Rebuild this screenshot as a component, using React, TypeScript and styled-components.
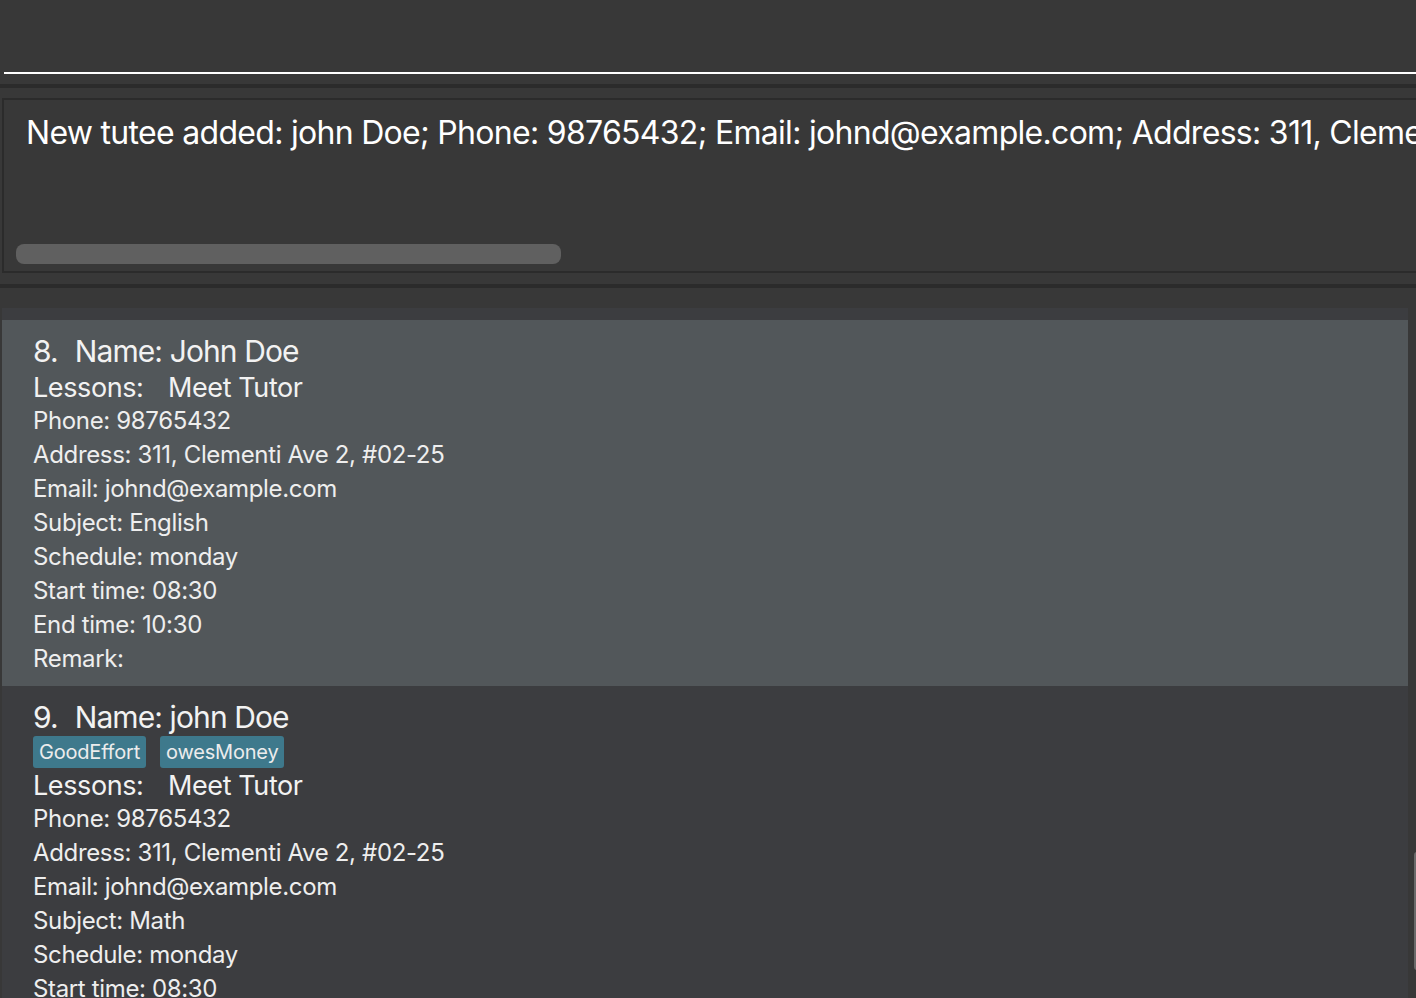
import React from "react";
import styled, { createGlobalStyle } from "styled-components";

const GlobalStyle = createGlobalStyle`
  html, body {
    margin: 0;
    padding: 0;
    background: #383838;
    overflow: hidden;
  }
  body {
    font-family: Inter, "Noto Sans", "Liberation Sans", sans-serif;
  }
`;

const Window = styled.div`
  width: 1416px;
  height: 998px;
  display: flex;
  flex-direction: column;
  background: #383838;
  overflow: hidden;
`;

const CommandBar = styled.div`
  height: 84px;
  padding-left: 4px;
  box-sizing: border-box;
  flex: none;
`;

const CommandField = styled.div`
  height: 74px;
  box-sizing: border-box;
  border-bottom: 2px solid #ffffff;
`;

const Divider = styled.div`
  height: 4px;
  background: #2b2b2b;
  flex: none;
`;

const ResultPane = styled.div`
  padding: 10px 0 11px 2px;
  flex: none;
`;

const ResultBox = styled.div`
  height: 175px;
  box-sizing: border-box;
  border: 2px solid #2b2b2b;
  border-right: none;
  display: flex;
  flex-direction: column;
  overflow: hidden;
`;

const ResultText = styled.div`
  padding: 13px 0 0 22px;
  font-size: 32px;
  line-height: 40px;
  color: #ffffff;
  white-space: nowrap;
  letter-spacing: -0.7px;
`;

const HScrollThumb = styled.div`
  margin: auto 0 7px 12px;
  width: 545px;
  height: 20px;
  border-radius: 8px;
  background: #606060;
`;

const ListPane = styled.div`
  padding: 20px 0 0 2px;
  flex: 1;
  min-height: 0;
  display: flex;
`;

const List = styled.div`
  flex: 1;
  display: flex;
  background: #3c3d40;
  padding-top: 12px;
  min-height: 0;
`;

const Cards = styled.div`
  width: 1406px;
  display: flex;
  flex-direction: column;
`;

const VTrack = styled.div`
  flex: 1;
  background: #383838;
  display: flex;
  flex-direction: column;
  margin-top: -12px;
`;

const VThumb = styled.div`
  margin: 544px 0 0 6px;
  width: 6px;
  height: 118px;
  border-radius: 3px;
  background: #6a6a6a;
`;

const Card = styled.div<{ $selected?: boolean }>`
  background: ${(p) => (p.$selected ? "#52575a" : "#3c3d40")};
  padding: 12px 0 10px 31px;
  display: flex;
  flex-direction: column;
  color: #eeeeee;
  flex: none;
`;

const NameRow = styled.div`
  display: flex;
  align-items: center;
  gap: 17px;
  height: 38px;
  font-size: 30px;
  letter-spacing: -0.9px;
  color: #f2f2f2;
`;

const Index = styled.span``;

const TagRow = styled.div`
  display: flex;
  gap: 14px;
  height: 32px;
  align-items: stretch;
`;

const Tag = styled.span`
  display: flex;
  align-items: center;
  padding: 0 6px;
  background: #3e798c;
  border-radius: 3px;
  font-size: 20px;
  color: #ececec;
  letter-spacing: -0.2px;
`;

const LessonRow = styled.div`
  display: flex;
  align-items: center;
  height: 34px;
  font-size: 27px;
  letter-spacing: -0.4px;
  color: #f2f2f2;
`;

const LessonLabel = styled.span`
  width: 135px;
`;

const Detail = styled.div`
  height: 34px;
  line-height: 34px;
  font-size: 24px;
  letter-spacing: -0.35px;
  color: #eeeeee;
`;

type Person = {
  index: number;
  name: string;
  tags: string[];
  phone: string;
  address: string;
  email: string;
  subject: string;
  schedule: string;
  start: string;
  end: string;
  remark: string;
  selected?: boolean;
};

const people: Person[] = [
  {
    index: 8,
    name: "John Doe",
    tags: [],
    phone: "98765432",
    address: "311, Clementi Ave 2, #02-25",
    email: "johnd@example.com",
    subject: "English",
    schedule: "monday",
    start: "08:30",
    end: "10:30",
    remark: "",
    selected: true,
  },
  {
    index: 9,
    name: "john Doe",
    tags: ["GoodEffort", "owesMoney"],
    phone: "98765432",
    address: "311, Clementi Ave 2, #02-25",
    email: "johnd@example.com",
    subject: "Math",
    schedule: "monday",
    start: "08:30",
    end: "10:30",
    remark: "",
  },
];

function PersonCard({ p }: { p: Person }) {
  return (
    <Card $selected={p.selected}>
      <NameRow>
        <Index>{p.index}.</Index>
        <span>Name: {p.name}</span>
      </NameRow>
      {p.tags.length > 0 && (
        <TagRow>
          {p.tags.map((t) => (
            <Tag key={t}>{t}</Tag>
          ))}
        </TagRow>
      )}
      <LessonRow>
        <LessonLabel>Lessons:</LessonLabel>
        <span>Meet Tutor</span>
      </LessonRow>
      <Detail>Phone: {p.phone}</Detail>
      <Detail>Address: {p.address}</Detail>
      <Detail>Email: {p.email}</Detail>
      <Detail>Subject: {p.subject}</Detail>
      <Detail>Schedule: {p.schedule}</Detail>
      <Detail>Start time: {p.start}</Detail>
      <Detail>End time: {p.end}</Detail>
      <Detail>Remark: {p.remark}</Detail>
    </Card>
  );
}

export default function App() {
  return (
    <>
      <GlobalStyle />
      <Window>
        <CommandBar>
          <CommandField />
        </CommandBar>
        <Divider />
        <ResultPane>
          <ResultBox>
            <ResultText>
              New tutee added: john Doe; Phone: 98765432; Email: johnd@example.com; Address: 311, Clementi Ave 2, #02-25; Tags: [GoodEffort][owesMoney]
            </ResultText>
            <HScrollThumb />
          </ResultBox>
        </ResultPane>
        <Divider />
        <ListPane>
          <List>
            <Cards>
              {people.map((p) => (
                <PersonCard key={p.index} p={p} />
              ))}
            </Cards>
            <VTrack>
              <VThumb />
            </VTrack>
          </List>
        </ListPane>
      </Window>
    </>
  );
}
